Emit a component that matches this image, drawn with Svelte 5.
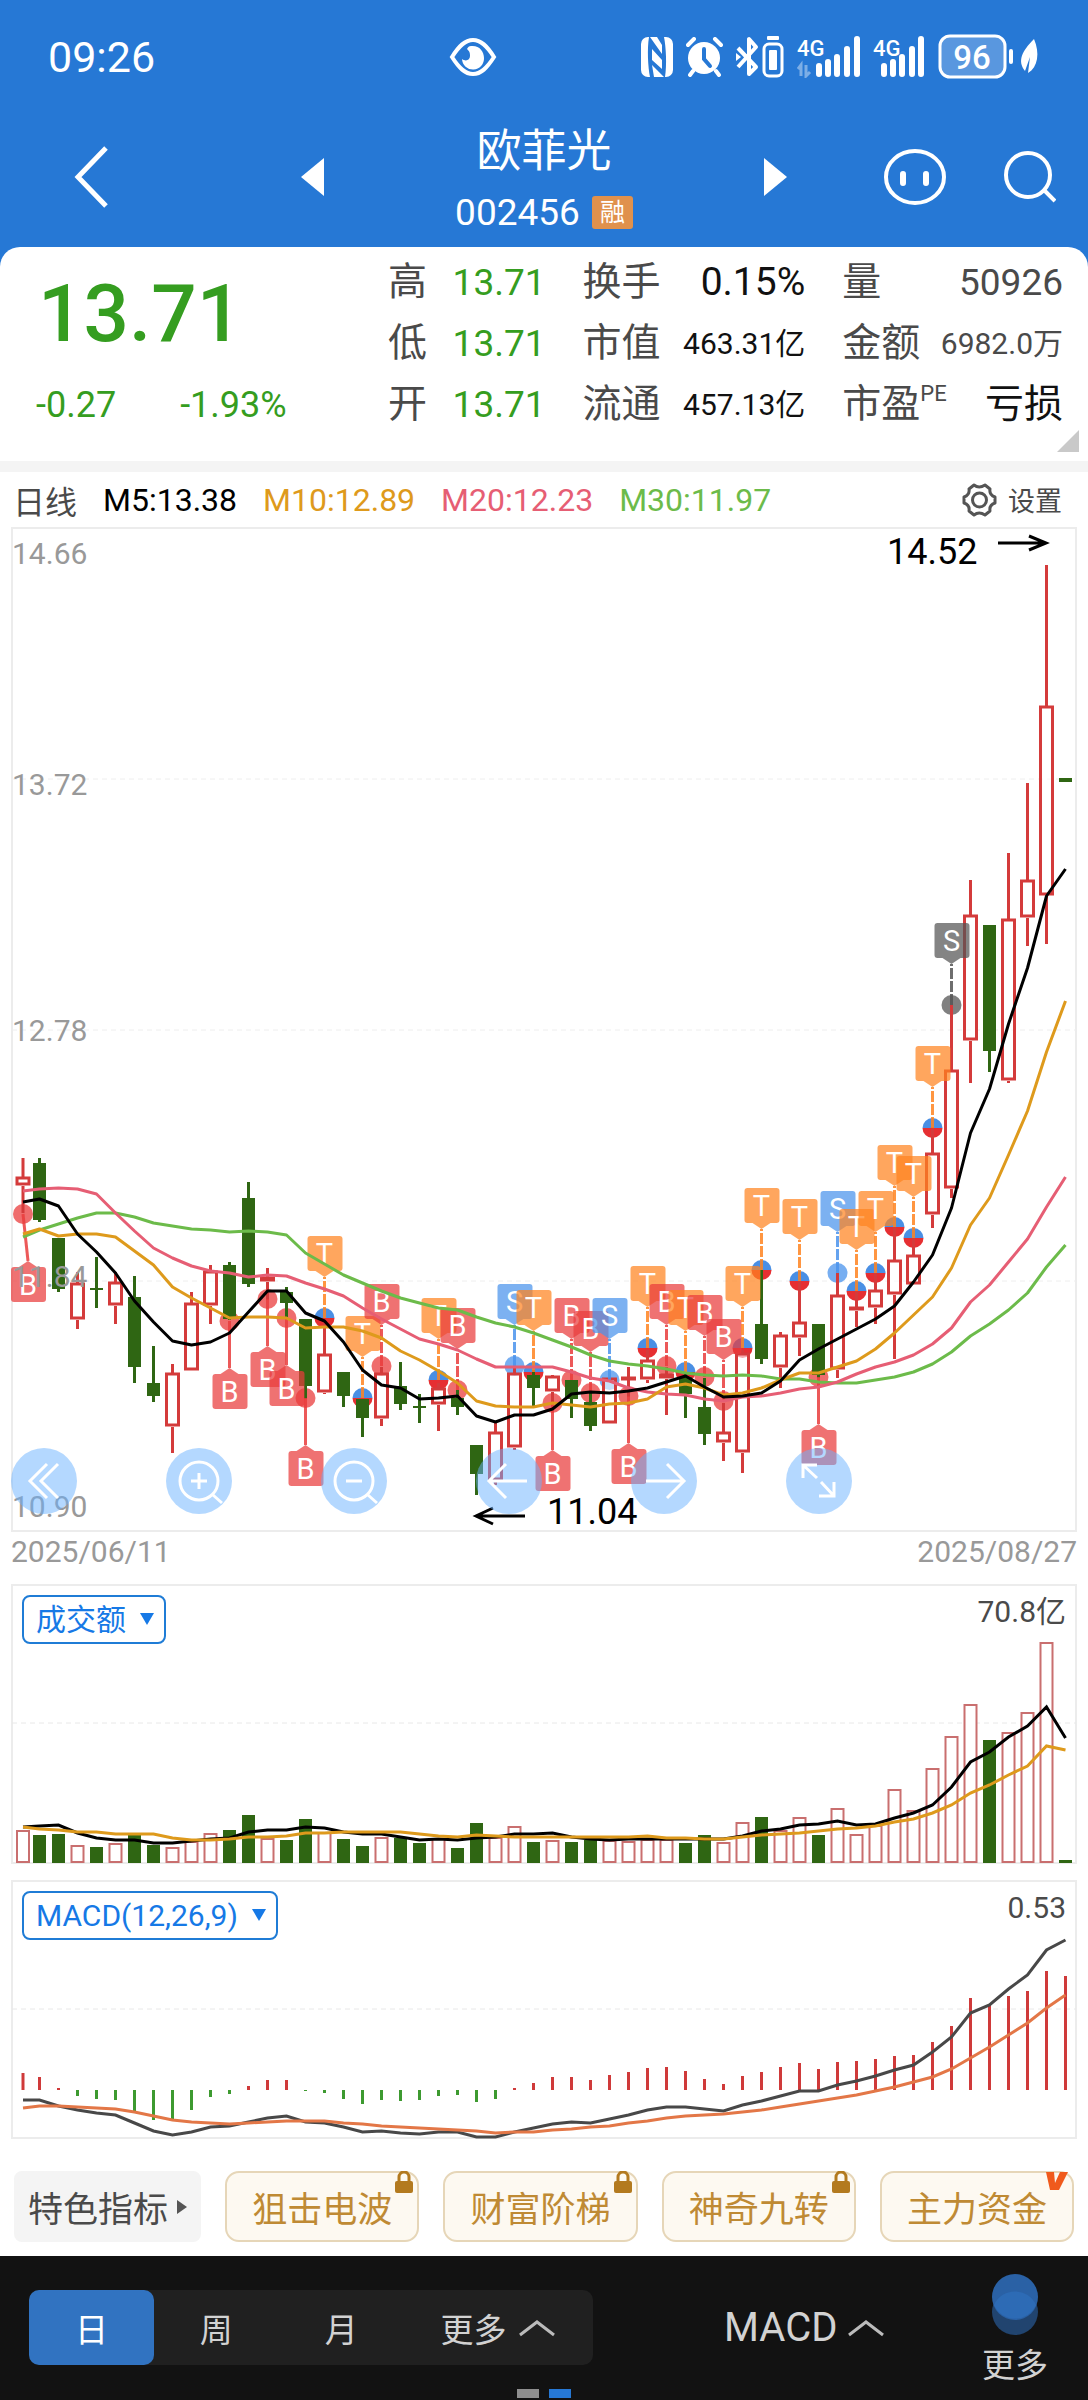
<script>
  const UP = 'up';
  const DOWN = 'down';

  // Daily candles: direction, high, body top, body bottom, low
  const candles = [
    [UP, 1158, 1177, 1186, 1213], [DOWN, 1158, 1163, 1220, 1222], [DOWN, 1238, 1238, 1289, 1292],
    [UP, 1272, 1283, 1320, 1329], [DOWN, 1257, 1288, 1290, 1308], [UP, 1272, 1282, 1306, 1324],
    [DOWN, 1276, 1297, 1367, 1383], [DOWN, 1346, 1383, 1396, 1402], [UP, 1364, 1373, 1427, 1453],
    [UP, 1292, 1303, 1371, 1371], [UP, 1265, 1271, 1306, 1324], [DOWN, 1262, 1265, 1319, 1320],
    [DOWN, 1182, 1198, 1284, 1287], [UP, 1268, 1277, 1282, 1300], [DOWN, 1287, 1292, 1303, 1317],
    [DOWN, 1319, 1319, 1386, 1399], [UP, 1320, 1354, 1393, 1394], [DOWN, 1372, 1372, 1396, 1407],
    [DOWN, 1399, 1399, 1418, 1437], [UP, 1367, 1373, 1419, 1426], [DOWN, 1362, 1386, 1404, 1410],
    [DOWN, 1394, 1406, 1408, 1423], [UP, 1383, 1388, 1405, 1431], [DOWN, 1390, 1398, 1407, 1415],
    [DOWN, 1445, 1445, 1474, 1495], [UP, 1422, 1432, 1481, 1485], [UP, 1367, 1373, 1448, 1450],
    [DOWN, 1370, 1375, 1388, 1406], [UP, 1375, 1376, 1392, 1403], [DOWN, 1380, 1380, 1399, 1418],
    [DOWN, 1393, 1402, 1426, 1431], [UP, 1378, 1378, 1424, 1424], [UP, 1367, 1377, 1380, 1397],
    [UP, 1350, 1360, 1380, 1383], [UP, 1367, 1374, 1379, 1415], [DOWN, 1372, 1377, 1394, 1418],
    [DOWN, 1378, 1407, 1434, 1445], [UP, 1403, 1432, 1443, 1461], [UP, 1350, 1353, 1453, 1473],
    [DOWN, 1270, 1324, 1359, 1364], [UP, 1332, 1335, 1368, 1388], [UP, 1281, 1322, 1338, 1356],
    [DOWN, 1324, 1324, 1375, 1378], [UP, 1273, 1295, 1370, 1378], [UP, 1290, 1307, 1311, 1327],
    [UP, 1273, 1290, 1308, 1324], [UP, 1227, 1260, 1295, 1359], [UP, 1238, 1255, 1285, 1285],
    [UP, 1127, 1153, 1215, 1228], [UP, 1005, 1070, 1189, 1198], [UP, 880, 915, 1041, 1083],
    [DOWN, 925, 925, 1051, 1072], [UP, 853, 919, 1081, 1083], [UP, 783, 880, 918, 946],
    [UP, 565, 706, 896, 944], [DOWN, 778, 778, 782, 782]
  ];

  const averages = [
    { color: '#6cbb4a', y: [1237, 1230, 1224, 1218, 1213, 1213, 1217, 1223, 1226, 1229, 1230, 1232, 1231, 1232, 1235, 1253, 1264, 1275, 1283, 1291, 1298, 1303, 1308, 1310, 1317, 1323, 1327, 1333, 1340, 1347, 1355, 1361, 1364, 1366, 1369, 1373, 1375, 1376, 1375, 1376, 1379, 1379, 1382, 1383, 1383, 1380, 1377, 1372, 1364, 1352, 1336, 1324, 1310, 1293, 1267, 1245] },
    { color: '#e65e74', y: [1191, 1189, 1188, 1189, 1194, 1213, 1231, 1248, 1258, 1266, 1271, 1273, 1277, 1275, 1276, 1283, 1289, 1296, 1308, 1319, 1329, 1339, 1344, 1350, 1359, 1367, 1367, 1367, 1367, 1372, 1378, 1381, 1388, 1392, 1394, 1395, 1399, 1401, 1397, 1396, 1393, 1389, 1387, 1382, 1374, 1367, 1362, 1355, 1344, 1328, 1302, 1285, 1262, 1239, 1207, 1177] },
    { color: '#de9a1c', y: [1234, 1229, 1236, 1234, 1234, 1237, 1251, 1265, 1287, 1298, 1308, 1318, 1317, 1317, 1318, 1328, 1327, 1327, 1331, 1338, 1351, 1360, 1371, 1383, 1401, 1406, 1407, 1407, 1403, 1405, 1407, 1404, 1403, 1399, 1387, 1384, 1388, 1395, 1393, 1388, 1380, 1373, 1373, 1367, 1361, 1349, 1333, 1315, 1297, 1268, 1225, 1198, 1155, 1111, 1052, 1001] },
    { color: '#000000', y: [1202, 1199, 1206, 1234, 1252, 1273, 1301, 1322, 1341, 1345, 1342, 1333, 1312, 1291, 1291, 1313, 1321, 1342, 1370, 1385, 1388, 1399, 1398, 1396, 1416, 1422, 1415, 1415, 1409, 1394, 1392, 1393, 1391, 1388, 1382, 1376, 1387, 1397, 1396, 1393, 1381, 1360, 1349, 1339, 1329, 1319, 1306, 1282, 1255, 1208, 1133, 1089, 1024, 968, 896, 869] }
  ];

  // Trade markers: candle index, letter, dot height, side of the flag
  const markers = [
    [0, 'B', 1214, 'below'], [11, 'B', 1321, 'below'], [13, 'B', 1299, 'below'], [14, 'B', 1318, 'below'],
    [15, 'B', 1398, 'below'], [16, 'T', 1318, 'above'], [18, 'T', 1398, 'above'], [19, 'B', 1366, 'above'],
    [22, 'T', 1380, 'above'], [23, 'B', 1390, 'above'], [26, 'S', 1366, 'above'], [27, 'T', 1372, 'above'],
    [28, 'B', 1403, 'below'], [29, 'B', 1380, 'above'], [30, 'B', 1393, 'above'], [31, 'S', 1380, 'above'],
    [32, 'B', 1396, 'below'], [33, 'T', 1348, 'above'], [34, 'B', 1366, 'above'], [35, 'T', 1372, 'above'],
    [36, 'B', 1377, 'above'], [37, 'B', 1401, 'above'], [38, 'T', 1348, 'above'], [39, 'T', 1270, 'above'],
    [41, 'T', 1281, 'above'], [42, 'B', 1377, 'below'], [43, 'S', 1273, 'above'], [44, 'T', 1291, 'above'],
    [45, 'T', 1273, 'above'], [46, 'T', 1227, 'above'], [47, 'T', 1238, 'above'], [48, 'T', 1128, 'above'],
    [49, 'S', 1005, 'above', 'muted']
  ];

  const volumes = [1830, 1835, 1834, 1845, 1847, 1843, 1835, 1845, 1847, 1841, 1833, 1830, 1815, 1838, 1840, 1819, 1832, 1839, 1846, 1837, 1838, 1843, 1838, 1848, 1823, 1837, 1826, 1842, 1840, 1842, 1840, 1840, 1841, 1839, 1839, 1843, 1835, 1842, 1822, 1817, 1830, 1817, 1835, 1808, 1834, 1825, 1789, 1810, 1768, 1736, 1704, 1740, 1732, 1712, 1642, 1860];
  const volumeFast = [1827, 1826, 1825, 1833, 1838, 1840, 1840, 1843, 1843, 1841, 1839, 1838, 1832, 1830, 1830, 1827, 1828, 1832, 1834, 1834, 1837, 1840, 1839, 1840, 1838, 1837, 1834, 1834, 1833, 1837, 1839, 1840, 1839, 1839, 1839, 1839, 1839, 1839, 1836, 1831, 1829, 1825, 1824, 1821, 1825, 1824, 1818, 1813, 1805, 1787, 1762, 1752, 1737, 1726, 1707, 1738];
  const volumeSlow = [1827, 1829, 1830, 1832, 1832, 1834, 1834, 1834, 1838, 1840, 1840, 1839, 1837, 1837, 1836, 1833, 1833, 1832, 1832, 1832, 1832, 1834, 1836, 1837, 1835, 1836, 1837, 1837, 1837, 1837, 1837, 1837, 1837, 1836, 1838, 1838, 1839, 1839, 1837, 1835, 1834, 1833, 1831, 1829, 1828, 1826, 1822, 1819, 1813, 1805, 1793, 1785, 1775, 1766, 1746, 1750];

  const zero = 2090;
  const histogram = [2073, 2077, 2088, 2096, 2099, 2100, 2111, 2120, 2120, 2110, 2097, 2094, 2086, 2080, 2080, 2091, 2093, 2099, 2104, 2100, 2101, 2100, 2096, 2095, 2102, 2099, 2088, 2083, 2077, 2077, 2080, 2075, 2072, 2068, 2067, 2071, 2079, 2084, 2076, 2072, 2067, 2063, 2069, 2062, 2061, 2059, 2056, 2055, 2042, 2026, 1998, 2004, 1996, 1991, 1971, 1976];
  const dif = [2100, 2100, 2106, 2110, 2113, 2115, 2123, 2131, 2135, 2132, 2127, 2126, 2122, 2118, 2116, 2122, 2123, 2127, 2132, 2131, 2133, 2134, 2132, 2132, 2137, 2137, 2132, 2128, 2124, 2122, 2123, 2119, 2115, 2110, 2107, 2107, 2109, 2111, 2105, 2101, 2096, 2091, 2091, 2085, 2081, 2076, 2070, 2065, 2052, 2037, 2013, 2005, 1989, 1975, 1950, 1940];
  const dea = [2108, 2106, 2106, 2107, 2108, 2109, 2112, 2116, 2120, 2122, 2123, 2124, 2123, 2122, 2121, 2121, 2121, 2123, 2124, 2126, 2127, 2128, 2129, 2130, 2131, 2133, 2132, 2132, 2130, 2129, 2127, 2126, 2123, 2121, 2118, 2116, 2115, 2114, 2112, 2110, 2107, 2104, 2101, 2098, 2095, 2091, 2087, 2082, 2077, 2069, 2058, 2047, 2035, 2023, 2008, 1995];

  const axis = [['14.66', 564], ['13.72', 795], ['12.78', 1041], ['11.84', 1287], ['10.90', 1517]];
  const xOf = (i) => (i === 0 ? 23 : 39.5 + 19 * (i - 1));
  const path = (ys) => ys.map((y, i) => `${xOf(i)},${y}`).join(' ');

  const flagColor = { B: '#e93c3c', S: '#4a93ec', T: '#ff8420', muted: '#555555' };

  const flags = markers.map(([i, letter, dot, side, tone]) => {
    const x = xOf(i);
    const below = side === 'below';
    const boxX = i === 0 ? 28 : x;
    const top = below ? dot + 53 : dot - 82;
    const tip = below
      ? `${boxX - 9},${top} ${boxX},${top - 6} ${boxX + 9},${top}`
      : `${boxX - 9},${top + 35} ${boxX},${top + 41} ${boxX + 9},${top + 35}`;
    return { x, boxX, top, tip, letter, dot, below, color: flagColor[tone ?? letter], end: below ? top - 6 : top + 41 };
  });

  const stats = [
    { tone: 'fall', rows: [['高', '13.71'], ['低', '13.71'], ['开', '13.71']] },
    { tone: 'dark', rows: [['换手', '0.15%'], ['市值', '463.31亿', 'small'], ['流通', '457.13亿', 'small']] },
    { tone: 'plain', rows: [['量', '50926'], ['金额', '6982.0万', 'small'], ['市盈', '亏损', 'loss', 'PE']] }
  ];

  const tools = [
    { name: '最早', d: 'M36 16 19 33l17 17M47 16 30 33l17 17' },
    { name: '放大', d: 'M33 14a19 19 0 1 0 0 38a19 19 0 1 0 0-38M47 47l9 8M25 33h16M33 25v16' },
    { name: '缩小', d: 'M33 14a19 19 0 1 0 0 38a19 19 0 1 0 0-38M47 47l9 8M25 33h16' },
    { name: '左移', d: 'M30 16 13 33l17 17M13 33h38' },
    { name: '右移', d: 'M36 16 53 33 36 50M53 33H15' },
    { name: '全屏', d: 'M31 30 17 17M17 30V17h14M35 34l13 14M48 34v14H33' }
  ];

  const premium = [['狙击电波', true], ['财富阶梯', true], ['神奇九转', true], ['主力资金', false]];
  const periods = ['日', '周', '月'];
  let period = $state('日');
</script>

<div class="page">
  <header>
    <div class="status">
      <span class="clock">09:26</span>
      <svg width="48" height="40" viewBox="0 0 48 40" aria-hidden="true">
        <path d="M3 20C10 9 16 3 24 3s14 6 21 17C38 31 32 37 24 37S10 31 3 20z" fill="none" stroke="#fff" stroke-width="4" />
        <path d="M22 9c8-1 13 5 13 12a11 11 0 0 1-22 1c4 3 8 1 8-3 0-4-1-5-3-7 1-2 2-3 4-3z" fill="#fff" />
      </svg>
      <div class="signals">
        <svg width="32" height="40" viewBox="0 0 32 40" aria-hidden="true">
          <path d="M8 0h-1a7 7 0 0 0-7 7v26a7 7 0 0 0 7 7h2c-2-10-3-28-1-40zM24 40h1a7 7 0 0 0 7-7V7a7 7 0 0 0-7-7h-2c2 10 3 28 1 40zM9 0h7l5 8v9zM11 12l10 11v9l-10-9zM11 28l12 12H13z" fill="#fff" />
        </svg>
        <svg width="37" height="40" viewBox="0 0 37 40" aria-hidden="true">
          <circle cx="18" cy="21" r="16" fill="#fff" />
          <path d="M2 8 8 2M35 8l-6-6M7 34l-3 4M30 34l3 4" stroke="#fff" stroke-width="4" stroke-linecap="round" />
          <path d="M18 12v10l6 7" fill="none" stroke="#2678d5" stroke-width="4" stroke-linecap="round" />
        </svg>
        <svg width="48" height="42" viewBox="0 0 48 42" aria-hidden="true">
          <path d="M2 31 20 11 13 3v35l7-7L2 12" fill="none" stroke="#fff" stroke-width="4" stroke-linejoin="round" />
          <path d="M0 17l5 4-5 4z" fill="#fff" />
          <rect x="28" y="8" width="18" height="32" rx="5" fill="none" stroke="#fff" stroke-width="3" />
          <rect x="33" y="14" width="8" height="20" rx="1" fill="#fff" /><rect x="31" y="0" width="12" height="4" rx="1" fill="#fff" />
        </svg>
        <svg width="63" height="42" viewBox="0 0 63 42" aria-hidden="true">
          <text x="0" y="20" font-size="22" font-weight="500" fill="#fff">4G</text>
          <path d="M4 40V29l-3 4M9 29v11l4-4" fill="none" stroke="#fff" stroke-opacity=".4" stroke-width="3" />
          <path d="M22 38v-8M31 38V26M40 38V21M50 38V13M60 38V3" stroke="#fff" stroke-width="6" stroke-linecap="round" />
        </svg>
        <svg width="52" height="42" viewBox="0 0 52 42" aria-hidden="true">
          <text x="0" y="20" font-size="22" font-weight="500" fill="#fff">4G</text>
          <path d="M11 38v-8M20 38V26M29 38V21M39 38V13M48 38V3" stroke="#fff" stroke-width="6" stroke-linecap="round" />
        </svg>
        <svg width="102" height="46" viewBox="0 0 102 46" aria-hidden="true">
          <rect x="2" y="2" width="65" height="41" rx="10" fill="#5997df" stroke="#fff" stroke-width="3" />
          <rect x="71" y="15" width="4" height="15" rx="2" fill="#fff" />
          <text x="34" y="35" font-size="33" font-weight="500" fill="#fff" text-anchor="middle">96</text>
          <path d="M96 5c6 14 4 28-6 34l2-16-5 14c-8-10-3-20 9-32z" fill="#fff" />
        </svg>
      </div>
    </div>
    <div class="titlebar">
      <div class="side left">
        <button class="bare" aria-label="返回"><svg width="36" height="64" viewBox="0 0 36 64"><path d="M32 3 4 32l28 29" fill="none" stroke="#fff" stroke-width="5" /></svg></button>
        <button class="bare" aria-label="上一只"><svg width="23" height="38" viewBox="0 0 23 38"><path d="M23 0v38L0 19z" fill="#fff" /></svg></button>
      </div>
      <div class="title">
        <h1>欧菲光</h1>
        <div class="code"><span>002456</span><span class="tag">融</span></div>
      </div>
      <div class="side">
        <button class="bare" aria-label="下一只"><svg width="23" height="38" viewBox="0 0 23 38"><path d="M0 0v38l23-19z" fill="#fff" /></svg></button>
        <div class="actions">
          <button class="bare" aria-label="助手"><svg width="62" height="58" viewBox="0 0 62 58"><ellipse cx="31" cy="29" rx="29" ry="26" fill="none" stroke="#fff" stroke-width="4" /><path d="M19 26v9M42 26v9" stroke="#fff" stroke-width="6" stroke-linecap="round" /></svg></button>
          <button class="bare" aria-label="搜索"><svg width="52" height="54" viewBox="0 0 52 54"><circle cx="24" cy="25" r="22" fill="none" stroke="#fff" stroke-width="4" /><path d="m40 40 11 11" stroke="#fff" stroke-width="4" /></svg></button>
        </div>
      </div>
    </div>
  </header>

  <section class="quote">
    <div class="price">
      <strong>13.71</strong>
      <div class="change"><span>-0.27</span><span>-1.93%</span></div>
    </div>
    {#each stats as group}
      <dl class={group.tone}>
        {#each group.rows as [label, value, size, note]}
          <div class="stat"><dt>{label}{#if note}<sup>{note}</sup>{/if}</dt><dd class={size}>{value}</dd></div>
        {/each}
      </dl>
    {/each}
    <svg class="corner" width="22" height="22" viewBox="0 0 22 22" aria-hidden="true"><path d="M22 0v22H0z" fill="#c9c9c9" /></svg>
  </section>

  <main>
    <div class="legend">
      <span>日线</span>
      <span class="m5">M5:13.38</span><span class="m10">M10:12.89</span><span class="m20">M20:12.23</span><span class="m30">M30:11.97</span>
      <button class="bare settings">
        <svg width="35" height="34" viewBox="0 0 35 34" aria-hidden="true">
          <path d="M12 2q5 4 11 0l5 4q-1 6 5 8v6q-6 2-5 8l-5 4q-6-4-11 0l-5-4q1-6-5-8v-6q6-2 5-8z" fill="none" stroke="#555" stroke-width="3" stroke-linejoin="round" />
          <circle cx="17.5" cy="17" r="7" fill="none" stroke="#555" stroke-width="3" />
        </svg>设置
      </button>
    </div>

    <div class="kline">
      <svg viewBox="11 527 1066 1005" role="img" aria-label="日线">
        <rect x="12" y="528" width="1064" height="1003" fill="none" stroke="#ececec" stroke-width="2" />
        {#each [779, 1030, 1281] as y}
          <line x1="12" x2="1076" y1={y} y2={y} stroke="#eee" stroke-width="1" stroke-dasharray="5 4" />
        {/each}
        {#each flags as f}
          {#if f.letter === 'T'}
            <path d="M{f.x - 10} {f.dot}a10 10 0 0 1 20 0z" fill="#4a8fe4" />
            <path d="M{f.x - 10} {f.dot}a10 10 0 0 0 20 0z" fill="#e62f32" />
          {:else}
            <circle cx={f.x} cy={f.dot} r="10" fill={f.color} fill-opacity=".75" />
          {/if}
        {/each}
        {#each candles as [dir, high, top, bottom, low], i}
          {@const x = xOf(i)}
          {#if dir === UP}
            <path d="M{x} {high}V{top}M{x} {bottom}V{low}" stroke="#d43b3b" stroke-width="3" />
            <rect x={x - 6} y={top + 1} width="12" height={Math.max(bottom - top - 3, 1)} fill={bottom - top > 8 ? '#fff' : '#d43b3b'} fill-opacity={bottom - top > 8 ? 0.6 : 1} stroke="#d43b3b" stroke-width="3" />
          {:else}
            <line x1={x} x2={x} y1={high} y2={low} stroke="#2f6613" stroke-width="3" />
            <rect x={x - 6.5} y={top} width="13" height={bottom - top} fill="#2f6613" />
          {/if}
        {/each}
        {#each flags as f}
          <line x1={f.x} x2={f.boxX} y1={f.dot} y2={f.end} stroke={f.color} stroke-width="3" stroke-opacity=".85" stroke-dasharray={f.below ? 'none' : '11 2'} />
          <rect x={f.boxX - 17} y={f.top} width="35" height="35" rx="3" fill={f.color} fill-opacity=".72" />
          <polygon points={f.tip} fill={f.color} fill-opacity=".72" />
          <text class="flag" x={f.boxX} y={f.top + 28} text-anchor="middle">{f.letter}</text>
        {/each}
        {#each averages as line}
          <polyline points={path(line.y)} fill="none" stroke={line.color} stroke-width="3" stroke-linejoin="round" />
        {/each}
        {#each axis as [label, y]}
          <text class="tick" x="12" {y}>{label}</text>
        {/each}
        <text class="peak" x="887" y="564">14.52</text>
        <path d="M998 543h48M1029 536l17 7-17 7" fill="none" stroke="#000" stroke-width="3" />
        <text class="peak" x="547" y="1524">11.04</text>
        <path d="M525 1516h-48M493 1508l-17 8 17 8" fill="none" stroke="#000" stroke-width="3" />
      </svg>
      <div class="tools">
        {#each tools as tool}
          <button aria-label={tool.name}><svg width="66" height="66" viewBox="0 0 66 66"><path d={tool.d} fill="none" stroke="#fff" stroke-width="3" /></svg></button>
        {/each}
      </div>
    </div>

    <div class="dates"><time>2025/06/11</time><time>2025/08/27</time></div>

    <div class="panel volume">
      <svg viewBox="11 1584 1066 280" role="img" aria-label="成交额">
        <rect x="12" y="1585" width="1064" height="278" fill="none" stroke="#ececec" stroke-width="2" />
        <line x1="12" x2="1076" y1="1723" y2="1723" stroke="#e8e8e8" stroke-dasharray="5 4" />
        {#each volumes as y, i}
          {#if candles[i][0] === UP}
            <rect x={xOf(i) - 6} y={y + 1} width="12" height={1861 - y} fill="#fff" stroke="#c96f6f" stroke-width="2" />
          {:else}
            <rect x={xOf(i) - 6.5} {y} width="13" height={1863 - y} fill="#2f6613" />
          {/if}
        {/each}
        <polyline points={path(volumeFast)} fill="none" stroke="#000" stroke-width="3" />
        <polyline points={path(volumeSlow)} fill="none" stroke="#de9a1c" stroke-width="3" />
      </svg>
      <div class="head">
        <div class="picker">
          <select aria-label="成交指标"><option>成交额</option></select>
          <svg width="14" height="12" viewBox="0 0 14 12" aria-hidden="true"><path d="M0 0h14L7 12z" fill="#1679e6" /></svg>
        </div>
        <span>70.8亿</span>
      </div>
    </div>

    <div class="panel">
      <svg viewBox="11 1880 1066 259" role="img" aria-label="MACD">
        <rect x="12" y="1881" width="1064" height="257" fill="none" stroke="#ececec" stroke-width="2" />
        <line x1="12" x2="1076" y1="2009" y2="2009" stroke="#e8e8e8" stroke-dasharray="5 4" />
        {#each histogram as y, i}
          <line x1={xOf(i)} x2={xOf(i)} y1={zero} y2={y} stroke={y < zero ? '#cf3a3a' : '#3d9a30'} stroke-width="3" />
        {/each}
        <polyline points={path(dif)} fill="none" stroke="#484848" stroke-width="3" />
        <polyline points={path(dea)} fill="none" stroke="#e37747" stroke-width="3" />
      </svg>
      <div class="head">
        <div class="picker">
          <select aria-label="技术指标"><option>MACD(12,26,9)</option></select>
          <svg width="14" height="12" viewBox="0 0 14 12" aria-hidden="true"><path d="M0 0h14L7 12z" fill="#1679e6" /></svg>
        </div>
        <span>0.53</span>
      </div>
    </div>
  </main>

  <div class="chips">
    <button class="chip special">特色指标<svg width="10" height="14" viewBox="0 0 10 14" aria-hidden="true"><path d="M0 0v14l10-7z" fill="#555" /></svg></button>
    {#each premium as [name, locked]}
      <button class="chip">{name}
        {#if locked}
          <svg class="mark" width="18" height="22" viewBox="0 0 18 22" aria-hidden="true"><path d="M4 10V6a5 5 0 0 1 10 0v4" fill="none" stroke="#b37a1f" stroke-width="3" /><rect y="10" width="18" height="12" rx="2" fill="#b37a1f" /></svg>
        {:else}
          <svg class="mark" width="22" height="20" viewBox="0 0 22 20" aria-hidden="true"><path d="M0 1h8l1 11 5-11h8L13 19H4z" fill="#f05a1c" /></svg>
        {/if}
      </button>
    {/each}
  </div>

  <nav>
    <div class="segment">
      {#each periods as p}
        <button class:active={period === p} onclick={() => (period = p)}>{p}</button>
      {/each}
      <button>更多<svg width="38" height="18" viewBox="0 0 38 18" aria-hidden="true"><path d="M2 16 19 3l17 13" fill="none" stroke="#bbb" stroke-width="3" /></svg></button>
    </div>
    <button class="indicator">MACD<svg width="38" height="18" viewBox="0 0 38 18" aria-hidden="true"><path d="M2 16 19 3l17 13" fill="none" stroke="#bbb" stroke-width="3" /></svg></button>
    <button class="more">
      <svg width="46" height="62" viewBox="0 0 46 62" aria-hidden="true"><circle cx="23" cy="38" r="23" fill="#21446f" /><circle cx="23" cy="23" r="23" fill="#2a61a5" /><path d="M2 31a23 23 0 0 1 42 0 23 23 0 0 1-42 0z" fill="#2d6bb5" /></svg>
      更多
    </button>
    <div class="pager"><i></i><i class="on"></i></div>
  </nav>
</div>

<style>
  :global(body) { background: #fff; }
  .page { background: #fff; color: #4a4a4a; font-family: Roboto, "Noto Sans CJK SC", sans-serif; }
  button { border: 0; padding: 0; background: none; color: inherit; font: inherit; cursor: pointer; }
  svg { display: block; flex: none; }
  .bare { display: flex; align-items: center; }

  header { background: #2678d5; color: #fff; padding: 20px 32px 27px; margin-bottom: -20px; }
  .status { display: grid; grid-template-columns: 401fr 48px 543fr; align-items: center; height: 74px; padding: 0 16px; }
  .clock { font-size: 43px; }
  .signals { display: flex; align-items: center; justify-content: flex-end; gap: 13px; }
  .titlebar { display: grid; grid-template-columns: 1fr auto 1fr; column-gap: 131px; align-items: center; height: 126px; padding-top: 20px; }
  .side { display: flex; align-items: center; justify-content: space-between; }
  .left { padding-left: 42px; }
  .actions { display: flex; align-items: center; gap: 58px; }
  .title { padding-top: 6px; text-align: center; }
  h1 { margin: 0; font-size: 45px; line-height: 64px; font-weight: 400; }
  .code { display: flex; align-items: center; justify-content: center; gap: 12px; height: 56px; font-size: 37px; }
  .tag { padding: 0 8px; border-radius: 3px; background: #e0914c; font-size: 25px; line-height: 33px; }

  .quote { position: relative; display: grid; grid-template-columns: 314fr 157fr 222fr 220fr; column-gap: 37px; padding: 5px 25px 26px 36px; background: #fff; border-radius: 20px 20px 0 0; border-bottom: 11px solid #f4f4f4; }
  .price { color: #359d20; }
  .price strong { display: block; padding-left: 2px; font-size: 80px; line-height: 124px; font-weight: 500; }
  .change { display: flex; gap: 64px; font-size: 36px; line-height: 58px; }
  dl { margin: 0; }
  .stat { display: flex; align-items: center; justify-content: space-between; height: 61px; white-space: nowrap; }
  dt { font-size: 39px; line-height: 61px; }
  dd { margin: 0; font-size: 37px; line-height: 61px; }
  .fall dd { color: #359d20; }
  .dark dd { color: #111; font-size: 39px; }
  dl dd.small { font-size: 30px; }
  dd.loss { color: #111; font-size: 39px; }
  sup { font-size: 22px; line-height: 22px; vertical-align: 16px; }
  .corner { position: absolute; right: 9px; bottom: 9px; }

  main { padding: 0 11px; }
  .legend { display: flex; align-items: center; gap: 26px; height: 55px; padding: 0 15px 0 2px; font-size: 32px; white-space: nowrap; }
  .m5 { color: #000; }
  .m10 { color: #de9a1c; }
  .m20 { color: #e65e74; }
  .m30 { color: #6cbb4a; }
  .settings { gap: 11px; margin-left: auto; font-size: 27px; }

  .kline { position: relative; }
  .kline > svg, .panel > svg { width: 100%; height: auto; }
  .flag { font-size: 29px; fill: #fff; }
  .tick { font-size: 30px; fill: #999; }
  .peak { font-size: 36px; fill: #000; }
  .tools { position: absolute; left: 0; bottom: 18px; display: flex; gap: 89px; }
  .tools button { border-radius: 50%; background: rgba(105, 178, 255, .5); }

  .dates { display: flex; justify-content: space-between; padding: 0 0 12px; color: #999; font-size: 30px; line-height: 40px; }

  .panel { display: grid; }
  .panel > * { grid-area: 1 / 1; }
  .volume { margin-bottom: 16px; }
  .head { display: flex; align-items: flex-start; justify-content: space-between; padding: 11px 11px; font-size: 30px; line-height: 34px; }
  .picker { position: relative; }
  select { appearance: none; display: block; height: 49px; padding: 0 38px 0 12px; border: 2px solid #1f7cd6; border-radius: 8px; background: #fff; color: #1679e6; font: inherit; }
  .picker svg { position: absolute; right: 12px; top: 18px; pointer-events: none; }

  .chips { display: grid; grid-template-columns: 187fr repeat(4, 194fr); gap: 24px; padding: 32px 14px 14px; }
  .chip { position: relative; display: flex; align-items: center; justify-content: center; height: 71px; border: 2px solid #e6d6b8; border-radius: 14px; background: #fdf9f1; color: #bf8a34; font-size: 35px; white-space: nowrap; }
  .special { gap: 9px; border-color: #f4f4f4; border-radius: 8px; background: #f4f4f4; color: #4a4a4a; }
  .mark { position: absolute; top: -2px; right: 4px; }

  nav { position: relative; display: grid; grid-template-columns: 565fr 389fr 65fr; align-items: start; height: 110px; padding: 34px 40px 0 29px; background: #121212; color: #d2d2d2; font-size: 33px; }
  .segment { display: grid; grid-template-columns: 125fr 125fr 125fr 190fr; height: 75px; border-radius: 10px; background: #202020; }
  .segment button { display: flex; align-items: center; justify-content: center; gap: 12px; border-radius: 10px; }
  .segment .active { background: #3173c1; color: #fff; }
  .indicator { display: flex; align-items: center; justify-content: center; gap: 10px; height: 75px; padding-left: 34px; font-size: 40px; }
  .more { display: flex; flex-direction: column; align-items: center; gap: 8px; margin-top: -16px; line-height: 44px; white-space: nowrap; }
  .pager { position: absolute; left: 0; right: 0; bottom: 2px; display: flex; justify-content: center; gap: 10px; }
  .pager i { width: 22px; height: 9px; background: #8e8e8e; }
  .pager .on { background: #2678d5; }
</style>
